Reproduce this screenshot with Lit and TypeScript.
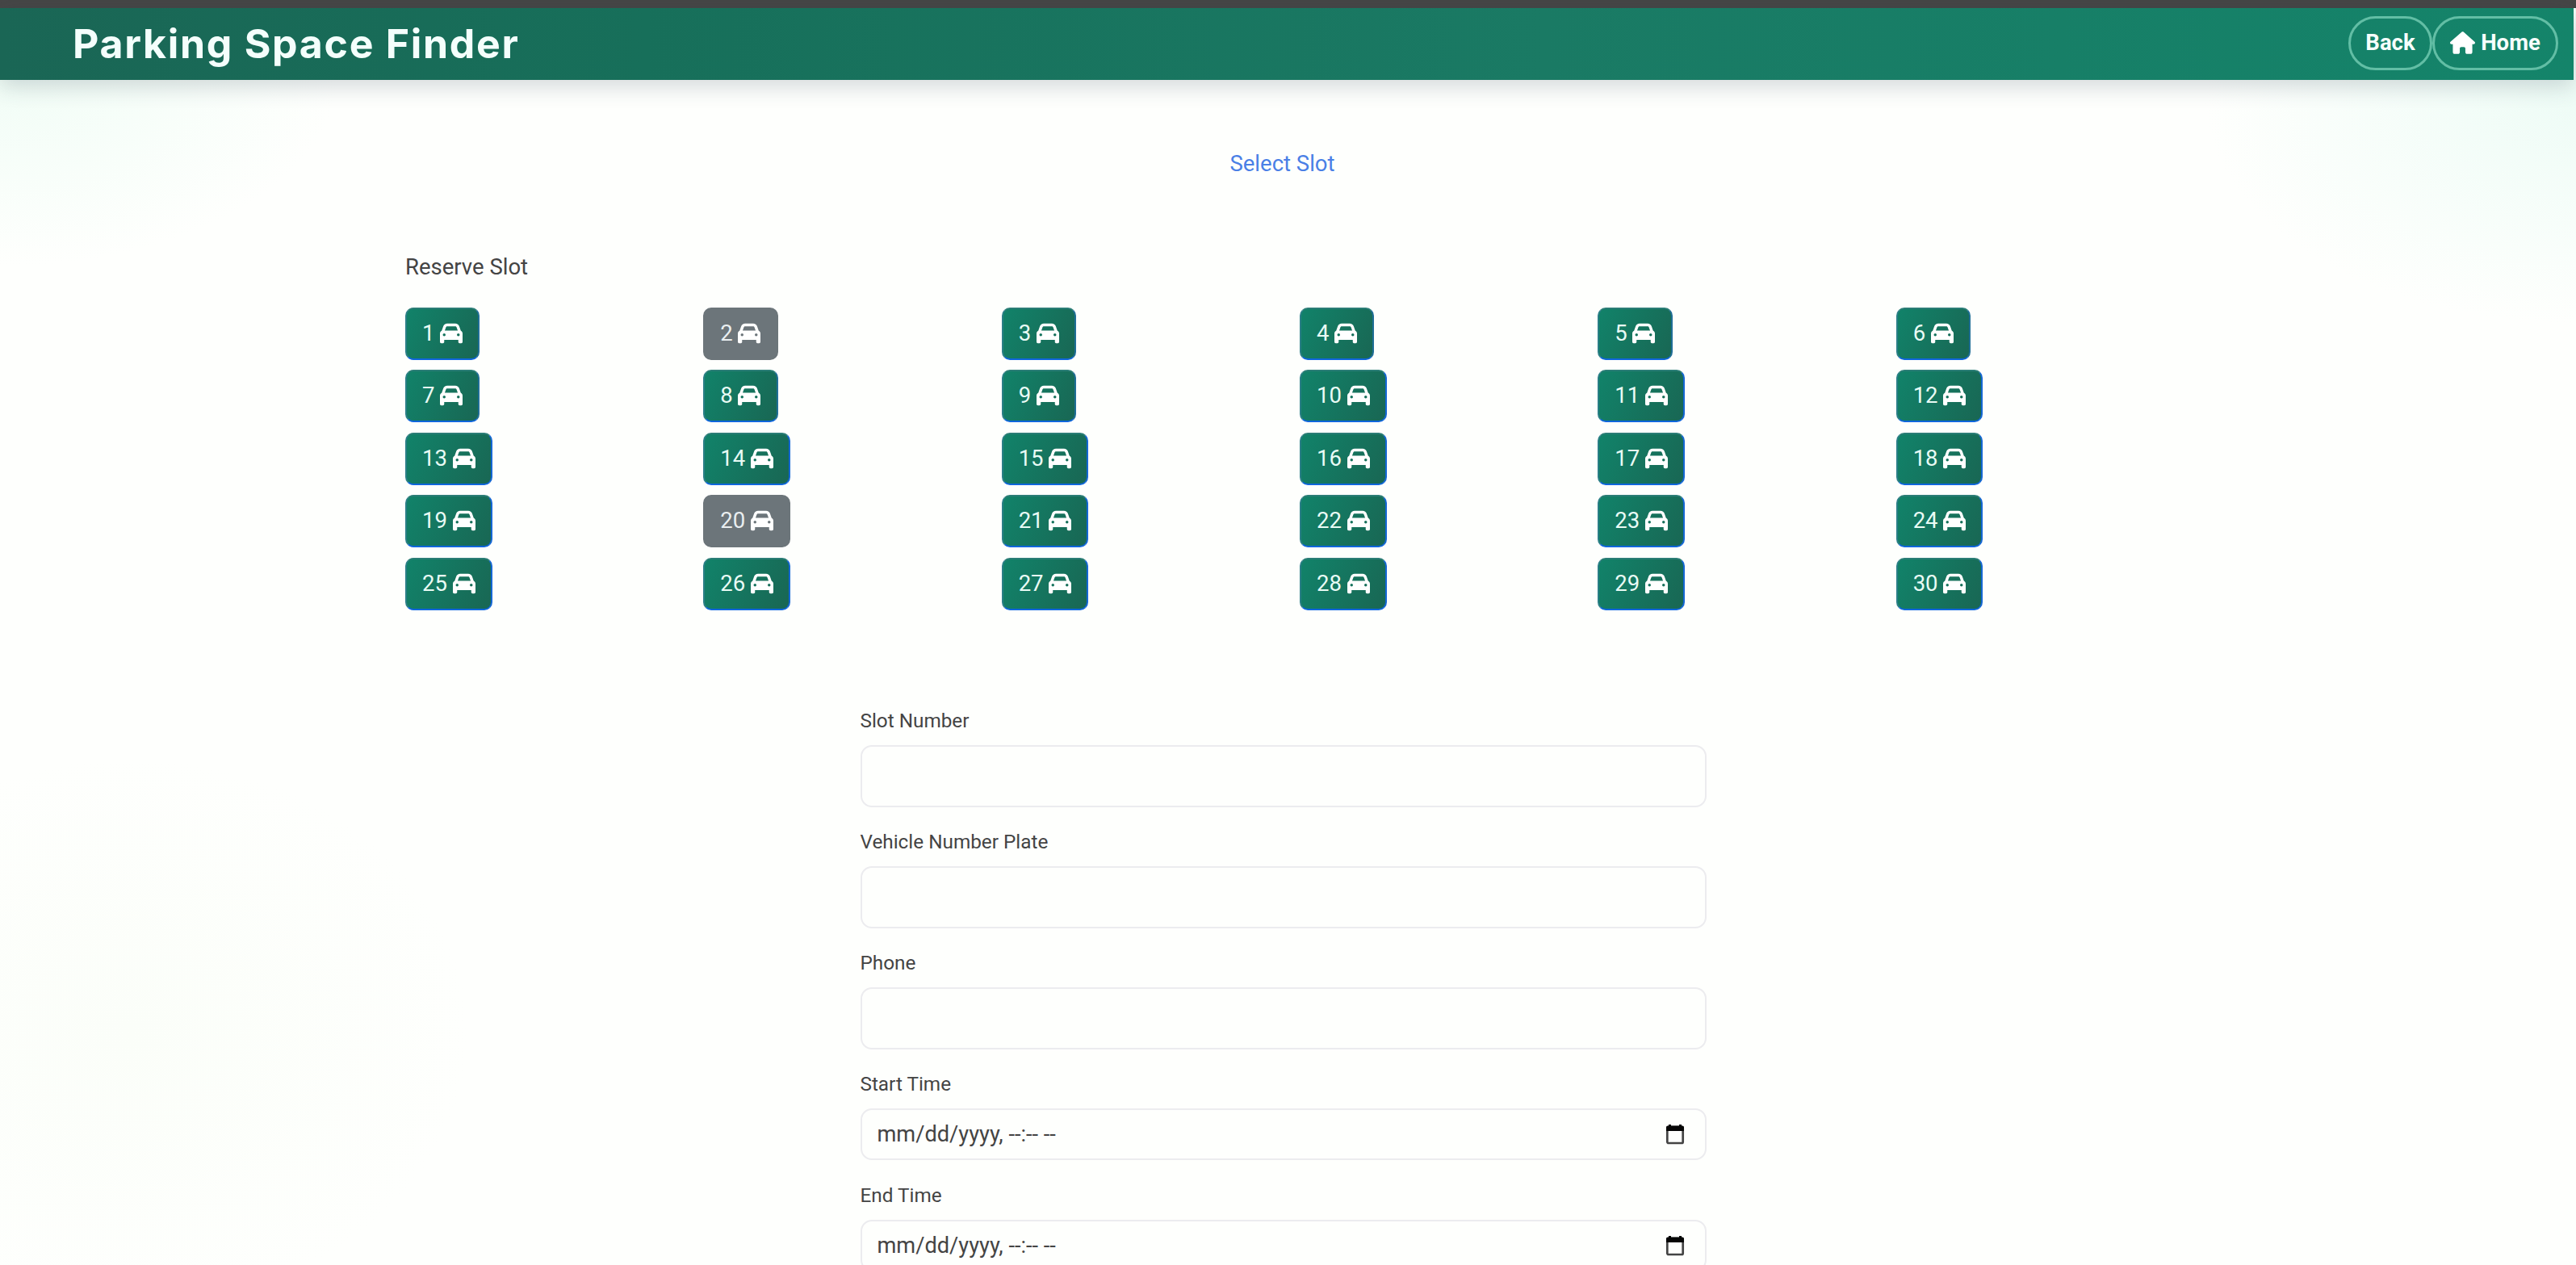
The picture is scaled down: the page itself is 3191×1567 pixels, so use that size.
import { LitElement, html, css, svg } from "lit";
import { customElement, property } from "lit/decorators.js";

const carIcon = svg`<path d="M135.2 117.4L109.1 192H402.9l-26.1-74.6C372.3 104.6 360.2 96 346.6 96H165.4c-13.6 0-25.7 8.6-30.2 21.4zM39.6 196.8L74.8 96.3C88.3 57.8 124.6 32 165.4 32H346.6c40.8 0 77.1 25.8 90.6 64.3l35.2 100.5c23.2 9.6 39.6 32.5 39.6 59.2V400v48c0 17.7-14.3 32-32 32H448c-17.7 0-32-14.3-32-32V400H96v48c0 17.7-14.3 32-32 32H32c-17.7 0-32-14.3-32-32V400 256c0-26.7 16.4-49.6 39.6-59.2zM128 288a32 32 0 1 0 -64 0 32 32 0 1 0 64 0zm288 32a32 32 0 1 0 0-64 32 32 0 1 0 0 64z"/>`;
const houseIcon = svg`<path d="M575.8 255.5c0 18-15 32.1-32 32.1h-32l.7 160.2c0 2.7-.2 5.4-.5 8.1V472c0 22.1-17.9 40-40 40H456c-1.1 0-2.2 0-3.3-.1c-1.4 .1-2.8 .1-4.2 .1H416 392c-22.1 0-40-17.9-40-40V448 384c0-17.7-14.3-32-32-32H256c-17.7 0-32 14.3-32 32v64 24c0 22.1-17.9 40-40 40H160 128.1c-1.5 0-3-.1-4.5-.2c-1.2 .1-2.4 .2-3.6 .2H104c-22.1 0-40-17.9-40-40V360c0-.9 0-1.9 .1-2.8V287.6H32c-18 0-32-14-32-32.1c0-9 3-17 10-24L266.4 8c7-7 15-8 22-8s15 2 21 7L564.8 231.5c8 7 12 15 11 24z"/>`;

@customElement("slot-button")
class SlotButton extends LitElement {
  @property({ type: Number }) number = 0;
  @property({ type: Boolean }) taken = false;

  static styles = css`
    :host { display: block; }
    .slot {
      box-sizing: border-box;
      display: flex;
      align-items: center;
      gap: 6.6px;
      width: max-content;
      height: 64.6px;
      padding: 0 19.2px 1px 19px;
      border: 2px solid;
      border-color: #2b7d76 #1f6e96 #0f66dc #2a7f86;
      border-radius: 10px;
      background: linear-gradient(115deg, #11836a, #196653) border-box;
      color: #e9fbf5;
      font: 400 27.5px/40px Roboto, sans-serif;
      cursor: pointer;
    }
    .wide { border-right-color: #1467d4; }
    .taken { background: #6c757a; border-color: #6c757a; color: #e9eef0; }
    .car { width: 28px; height: 28px; fill: #fff; }
  `;

  render() {
    const kind = this.taken ? "taken" : this.number > 9 ? "wide" : "";
    return html`<button class="slot ${kind}" ?disabled=${this.taken}>
      <span>${this.number}</span><svg class="car" viewBox="0 0 512 512">${carIcon}</svg>
    </button>`;
  }
}

@customElement("form-field")
class FormField extends LitElement {
  @property() label = "";
  @property({ type: Boolean }) time = false;

  static styles = css`
    :host { display: block; }
    .label {
      box-sizing: border-box;
      display: block;
      height: 48px;
      padding-top: 1px;
      color: #444;
      font: 400 24.3px/34px Roboto, sans-serif;
    }
    .box {
      box-sizing: border-box;
      display: flex;
      align-items: center;
      justify-content: space-between;
      height: 77px;
      padding: 0 25px 0 19px;
      border: 2px solid #ececef;
      border-radius: 14px;
      background: #fefffd;
      color: #444;
      font: 400 27.2px/40px Roboto, sans-serif;
    }
    .time { height: 64px; }
    .calendar { width: 24px; height: 26px; }
  `;

  render() {
    return html`<span class="label">${this.label}</span>
      <div class="box ${this.time ? "time" : ""}">
        ${this.time
          ? html`<span>mm/dd/yyyy, --:-- --</span>
              <svg class="calendar" viewBox="0 0 24 26">
                <rect x="2.3" y="4" width="19.4" height="20" rx="1.5" fill="none" stroke="#444" stroke-width="2.7" />
                <path d="M1 4.5Q1 2.5 3 2.5H4V1H7V2.5H17V1H20V2.5H21Q23 2.5 23 4.5V9H1Z" fill="#050505" />
              </svg>`
          : ""}
      </div>`;
  }
}

@customElement("app-root")
class AppRoot extends LitElement {
  static styles = css`
    :host { display: block; font-family: Roboto, sans-serif; }
    .page {
      box-sizing: border-box;
      height: 1567px;
      overflow: hidden;
      display: flex;
      flex-direction: column;
      background:
        radial-gradient(ellipse 420px 240px at 0 90px, #f1fdf6, transparent),
        radial-gradient(ellipse 460px 280px at 100% 120px, #eefcf6, transparent),
        radial-gradient(ellipse 420px 340px at 160px 1280px, #fbfef9, transparent),
        #fefffd;
    }
    .strip { flex: none; height: 10px; background: #464646; }
    .header {
      flex: none;
      box-sizing: border-box;
      display: flex;
      align-items: center;
      justify-content: space-between;
      height: 89px;
      margin-right: 3px;
      padding: 0 19px 2px 90px;
      background: linear-gradient(90deg, #1a6655, #176f5a 25%, #1a7a64 60%, #14846a);
      box-shadow: 0 8px 26px rgba(40, 60, 80, 0.2);
    }
    .title {
      margin: 0;
      color: #f4fffc;
      font: 700 50px/60px Inter, sans-serif;
      letter-spacing: 1.7px;
      white-space: nowrap;
    }
    .nav { display: flex; }
    .pill {
      box-sizing: border-box;
      display: flex;
      align-items: center;
      justify-content: center;
      gap: 7px;
      height: 67px;
      padding: 0 0 1px;
      border: 3px solid #62bea5;
      border-radius: 34px;
      color: #f6fffc;
      font: 700 27.5px/40px Roboto, sans-serif;
    }
    .back { width: 104px; }
    .home { width: 156px; }
    .house { width: 31px; height: 28px; fill: #fff; }
    .step {
      margin-top: 84px;
      padding-right: 14px;
      height: 40px;
      text-align: center;
      color: #4a7fe6;
      font-size: 27.5px;
      line-height: 40px;
    }
    .lot { margin: 88px 0 0 502px; width: 2216px; }
    .caption { height: 70px; color: #444; font-size: 27.5px; line-height: 40px; }
    .slots { display: grid; grid-template-columns: repeat(6, 1fr); row-gap: 12.9px; }
    .form {
      display: flex;
      flex-direction: column;
      gap: 25.3px;
      width: 1048px;
      margin: 119px 0 0 1065.5px;
    }
  `;

  private taken = [2, 20];

  render() {
    const numbers = Array.from({ length: 30 }, (_, i) => i + 1);
    return html`<main class="page">
      <div class="strip"></div>
      <header class="header">
        <h1 class="title">Parking Space Finder</h1>
        <nav class="nav">
          <a class="pill back">Back</a>
          <a class="pill home"><svg class="house" viewBox="0 0 576 512">${houseIcon}</svg><span>Home</span></a>
        </nav>
      </header>
      <div class="step">Select Slot</div>
      <section class="lot">
        <div class="caption">Reserve Slot</div>
        <div class="slots">
          ${numbers.map((n) => html`<slot-button .number=${n} .taken=${this.taken.includes(n)}></slot-button>`)}
        </div>
      </section>
      <section class="form">
        <form-field label="Slot Number"></form-field>
        <form-field label="Vehicle Number Plate"></form-field>
        <form-field label="Phone"></form-field>
        <form-field label="Start Time" time></form-field>
        <form-field label="End Time" time></form-field>
      </section>
    </main>`;
  }
}
